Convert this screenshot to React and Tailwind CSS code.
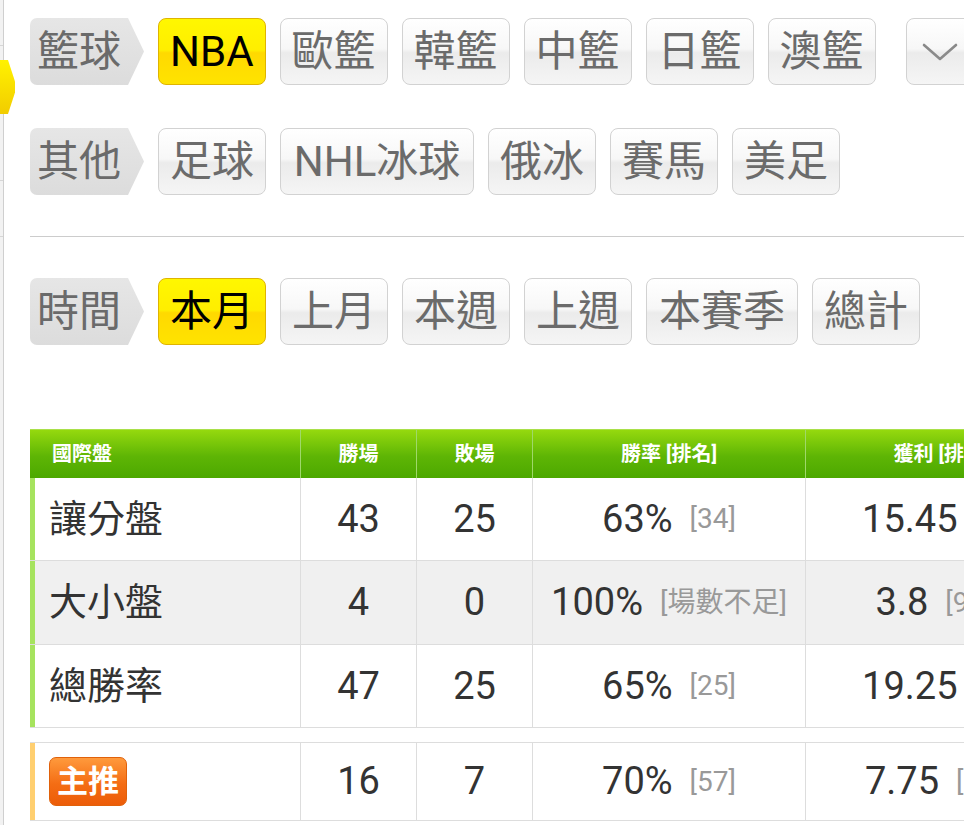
import React from "react";

const FONT = "font-['Roboto','Noto_Sans_CJK_TC',sans-serif]";

function Label({ text }) {
  return (
    <div className="h-[67px] w-[114px] shrink-0 bg-[linear-gradient(to_bottom,#e6e6e6,#dcdcdc)] rounded-l-[7px] [clip-path:polygon(0_0,98px_0,114px_50%,98px_100%,0_100%)] flex items-center pl-[7px] text-[42px] leading-none text-[#6a6a6a]">
      {text}
    </div>
  );
}

function Btn({ text, active, extra = "px-[11px]" }) {
  return (
    <div
      className={
        "h-[67px] shrink-0 rounded-[8px] border flex items-center justify-center text-[42px] leading-none whitespace-nowrap " +
        extra +
        " " +
        (active
          ? "border-[#dfb400] text-black bg-[linear-gradient(to_bottom,#fff700_0%,#ffee00_48%,#ffd900_52%,#ffe300_100%)]"
          : "border-[#d2d2d2] text-[#6b6b6b] bg-[linear-gradient(to_bottom,#ffffff_0%,#f7f7f7_46%,#ebebeb_52%,#f5f5f5_100%)]")
      }
    >
      {text}
    </div>
  );
}

function Row({ bg, bar, first, w, l, rate, rank, profit, prank, h = "h-[83px]" }) {
  return (
    <div className={"flex border-b border-[#dddddd] " + h + " " + bg}>
      <div className={"w-[271px] shrink-0 border-l-[5px] border-r border-r-[#dddddd] flex items-center pl-[14px] text-[38px] text-[#333] " + bar}>
        {first}
      </div>
      <div className="w-[116px] shrink-0 border-r border-[#dddddd] flex items-center justify-center text-[38px] text-[#333]">{w}</div>
      <div className="w-[116px] shrink-0 border-r border-[#dddddd] flex items-center justify-center text-[38px] text-[#333]">{l}</div>
      <div className="w-[273px] shrink-0 border-r border-[#dddddd] flex items-center justify-center whitespace-nowrap">
        <span className="text-[38px] text-[#333]">{rate}</span>
        <span className="ml-[17px] text-[28px] text-[#999]">{rank}</span>
      </div>
      <div className="w-[271px] shrink-0 flex items-center justify-center whitespace-nowrap">
        <span className="text-[38px] text-[#333]">{profit}</span>
        <span className="ml-[17px] text-[28px] text-[#999]">{prank}</span>
      </div>
    </div>
  );
}

export default function App() {
  return (
    <div className={"relative w-[964px] h-[825px] overflow-hidden bg-white flex " + FONT}>
      <div className="relative w-[4px] shrink-0 border-r border-[#cfcfcf] bg-[#f2f2f2] flex flex-col">
        <div className="mt-[45px] h-px bg-[#d6d6d6]" />
        <div className="mt-[134px] h-px bg-[#d6d6d6]" />
        <div className="mt-[55px] h-px bg-[#d6d6d6]" />
      </div>
      <div className="absolute left-0 top-[60px] w-[15px] h-[54px] bg-[linear-gradient(to_bottom,#fff200,#f2cc00)] [clip-path:polygon(0_0,8px_0,15px_40%,15px_60%,8px_100%,0_100%)]" />

      <div className="flex-1 pl-[26px] pt-[18px] flex flex-col">
        <div className="flex items-center gap-[14px]">
          <Label text="籃球" />
          <Btn text="NBA" active />
          <Btn text="歐籃" />
          <Btn text="韓籃" />
          <Btn text="中籃" />
          <Btn text="日籃" />
          <Btn text="澳籃" />
          <div className="ml-[16px] h-[67px] w-[80px] shrink-0 rounded-[8px] border border-[#d2d2d2] bg-[linear-gradient(to_bottom,#ffffff_0%,#f7f7f7_46%,#ebebeb_52%,#f5f5f5_100%)] flex items-center pl-[15px]">
            <svg width="36" height="20" viewBox="0 0 36 20" fill="none">
              <path d="M2 3 L18 17 L34 3" stroke="#8a8a8a" strokeWidth="2.6" strokeLinecap="round" strokeLinejoin="round" />
            </svg>
          </div>
        </div>

        <div className="mt-[43px] flex items-center gap-[14px]">
          <Label text="其他" />
          <Btn text="足球" />
          <Btn text="NHL冰球" extra="w-[194px]" />
          <Btn text="俄冰" />
          <Btn text="賽馬" />
          <Btn text="美足" />
        </div>

        <div className="mt-[41px] h-px bg-[#cccccc] w-[960px]" />

        <div className="mt-[41px] flex items-center gap-[14px]">
          <Label text="時間" />
          <Btn text="本月" active />
          <Btn text="上月" />
          <Btn text="本週" />
          <Btn text="上週" />
          <Btn text="本賽季" extra="w-[152px]" />
          <Btn text="總計" />
        </div>

        <div className="mt-[84px] flex flex-col w-[1047px]">
          <div className="flex h-[49px] bg-[linear-gradient(to_bottom,#95d90e,#5eb505_55%,#4ca800)] text-white font-bold text-[20px] border-t border-[#a9e04a]">
            <div className="w-[271px] shrink-0 flex items-center pl-[22px] border-r border-[#9fd86a]">國際盤</div>
            <div className="w-[116px] shrink-0 flex items-center justify-center border-r border-[#9fd86a]">勝場</div>
            <div className="w-[116px] shrink-0 flex items-center justify-center border-r border-[#9fd86a]">敗場</div>
            <div className="w-[273px] shrink-0 flex items-center justify-center border-r border-[#9fd86a] whitespace-nowrap">勝率 [排名]</div>
            <div className="w-[271px] shrink-0 flex items-center justify-center whitespace-nowrap">獲利 [排名]</div>
          </div>
          <Row bg="bg-white" bar="border-l-[#a6e35e]" first="讓分盤" w="43" l="25" rate="63%" rank="[34]" profit="15.45" prank="[12]" />
          <Row bg="bg-[#f0f0f0]" bar="border-l-[#a6e35e]" first="大小盤" w="4" l="0" rate="100%" rank="[場數不足]" profit="3.8" prank="[915]" h="h-[84px]" />
          <Row bg="bg-white" bar="border-l-[#a6e35e]" first="總勝率" w="47" l="25" rate="65%" rank="[25]" profit="19.25" prank="[10]" />
          <div className="mt-[14px] border-t border-[#dddddd]">
            <Row
              bg="bg-white"
              bar="border-l-[#ffcf70]"
              first={
                <span className="h-[49px] w-[78px] rounded-[7px] border border-[#e0610a] bg-[linear-gradient(to_bottom,#ff9a3c,#f46d14_55%,#ec5c08)] text-white font-bold text-[31px] flex items-center justify-center leading-none">
                  主推
                </span>
              }
              w="16"
              l="7"
              rate="70%"
              rank="[57]"
              profit="7.75"
              prank="[130]"
              h="h-[78px]"
            />
          </div>
        </div>
      </div>
    </div>
  );
}
